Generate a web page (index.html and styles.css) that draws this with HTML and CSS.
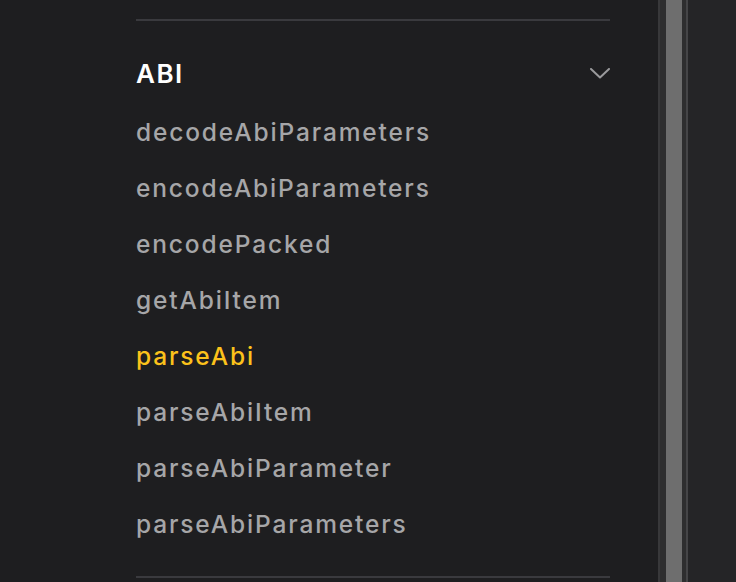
FILE: index.html
```html
<!DOCTYPE html>
<html lang="en">
<head>
<meta charset="utf-8">
<link rel="stylesheet" href="styles.css">
</head>
<body>
<div class="layout">
  <nav class="sidebar">
    <div class="divider"></div>
    <section class="group">
      <div class="group-head">
        <span class="group-title">ABI</span>
        <svg class="chevron" width="20" height="11" viewBox="0 0 20 11" aria-hidden="true">
          <path d="M1 1 L10 9.5 L19 1" fill="none" stroke="#9a9a9c" stroke-width="2" stroke-linecap="round" stroke-linejoin="round"/>
        </svg>
      </div>
      <ul class="items">
        <li class="item">decodeAbiParameters</li>
        <li class="item">encodeAbiParameters</li>
        <li class="item">encodePacked</li>
        <li class="item">getAbiItem</li>
        <li class="item active">parseAbi</li>
        <li class="item">parseAbiItem</li>
        <li class="item">parseAbiParameter</li>
        <li class="item">parseAbiParameters</li>
      </ul>
    </section>
    <div class="divider"></div>
  </nav>
  <div class="edge"></div>
  <div class="scrollbar"><div class="thumb"></div></div>
  <div class="edge2"></div>
  <main class="content"></main>
</div>
</body>
</html>
```
FILE: styles.css
```css
* { box-sizing: border-box; }
html, body { margin: 0; padding: 0; height: 100%; }
body {
  background: #1e1e20;
  font-family: Inter, "Noto Sans", sans-serif;
  overflow: hidden;
}
.layout {
  display: flex;
  height: 582px;
}
.sidebar {
  width: 658px;
  flex: none;
  background: #1e1e20;
  padding: 19px 48px 0 136px;
}
.divider {
  height: 2px;
  background: #3a3a3e;
}
.group {
  padding: 24px 0 24px;
}
.group-head {
  height: 56px;
  display: flex;
  align-items: center;
  justify-content: space-between;
}
.group-title {
  color: #ffffff;
  font-size: 26px;
  font-weight: 600;
  letter-spacing: 1.5px;
}
.chevron { display: block; margin-top: 1px; }
.items {
  list-style: none;
  margin: 3px 0 0;
  padding: 0;
}
.item {
  height: 56px;
  display: flex;
  align-items: center;
  color: #a6a6a8;
  font-size: 24.5px;
  font-weight: 500;
  letter-spacing: 1.85px;
}
.item.active { color: #fcc21b; }
.edge { width: 2px; flex: none; background: #38383a; }
.scrollbar {
  width: 26px;
  flex: none;
  background: #2e2e2f;
  padding: 0 4px 0 6px;
}
.thumb { height: 100%; background: #6e6e6e; }
.edge2 { width: 2px; flex: none; background: #454547; }
.content { flex: 1; background: #252527; }
```
